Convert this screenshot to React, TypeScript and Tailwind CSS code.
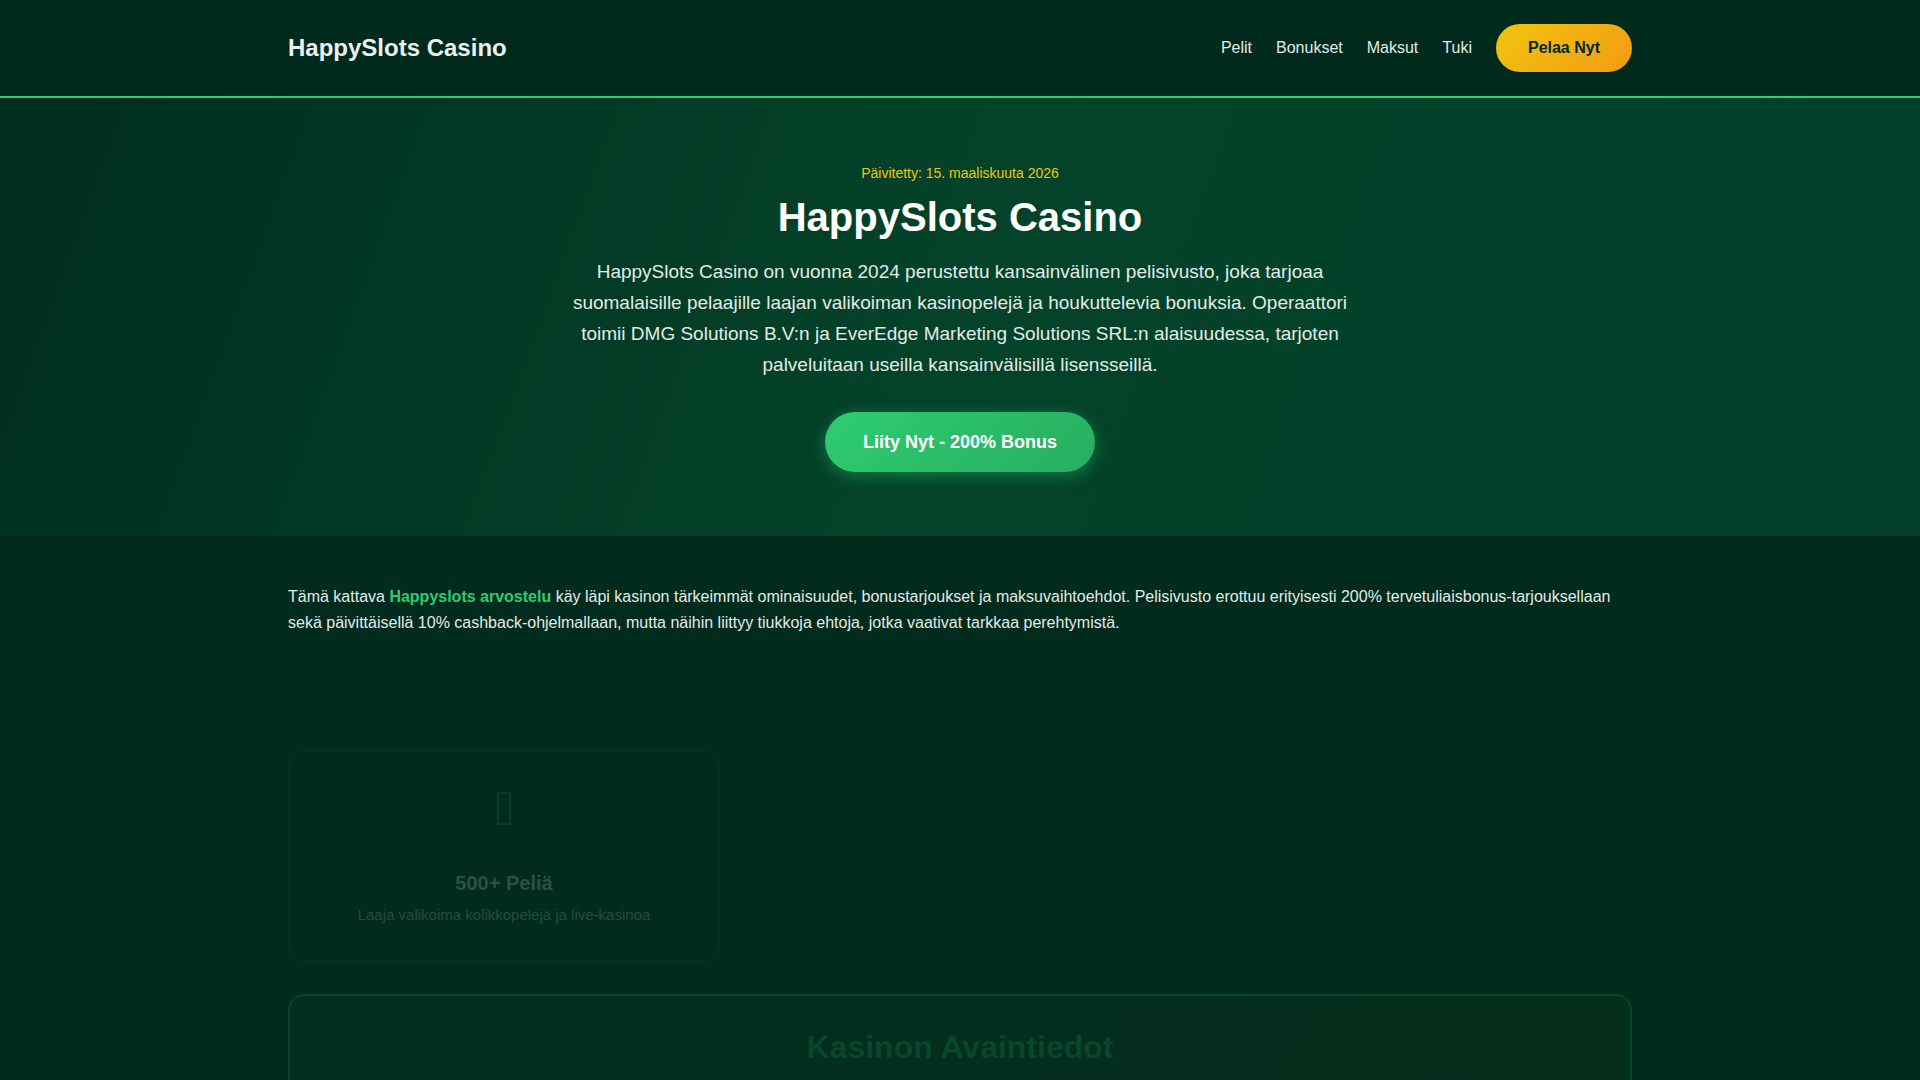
import React from 'react';

const navItems = [
  { label: 'Pelit', href: '#pelit' },
  { label: 'Bonukset', href: '#bonukset' },
  { label: 'Maksut', href: '#maksut' },
  { label: 'Tuki', href: '#tuki' },
];

const features = [
  { title: '500+ Peliä', text: 'Laaja valikoima kolikkopelejä ja live-kasinoa' },
];

function Header() {
  return (
    <header className="border-b-2 border-[#2ecc71] bg-[#002a1c] px-6 py-6">
      <div className="mx-auto flex max-w-[1344px] items-center justify-between">
        <a href="#" className="text-2xl font-bold text-[#ecf0f1]">
          HappySlots Casino
        </a>
        <nav className="flex items-center gap-6">
          {navItems.map((item) => (
            <a key={item.href} href={item.href}>
              {item.label}
            </a>
          ))}
          <button
            type="button"
            className="h-12 rounded-full bg-linear-[135deg,#f1c40f,#f39c12] px-8 font-bold text-[#002a1c]"
          >
            Pelaa Nyt
          </button>
        </nav>
      </div>
    </header>
  );
}

function Hero() {
  return (
    <section className="bg-linear-[110deg,#002d1e,#044329_50%,#00402b] px-6 py-16 text-center">
      <div className="mx-auto flex max-w-[800px] flex-col items-center">
        <p className="text-sm leading-[22px] text-[#f1c40f]">Päivitetty: 15. maaliskuuta 2026</p>
        <h1 className="mt-2 mb-[14px] text-[40px] leading-[50px] font-bold text-white">HappySlots Casino</h1>
        <p className="mb-8 text-[19px] leading-[31px]">
          HappySlots Casino on vuonna 2024 perustettu kansainvälinen pelisivusto, joka tarjoaa
          suomalaisille pelaajille laajan valikoiman kasinopelejä ja houkuttelevia bonuksia. Operaattori
          toimii DMG Solutions B.V:n ja EverEdge Marketing Solutions SRL:n alaisuudessa, tarjoten
          palveluitaan useilla kansainvälisillä lisensseillä.
        </p>
        <button
          type="button"
          className="h-[60px] rounded-full bg-linear-[135deg,#2ecc71,#27ae60] px-[38px] text-lg font-bold text-white shadow-[0_4px_15px_rgba(46,204,113,0.4)]"
        >
          Liity Nyt - 200% Bonus
        </button>
      </div>
    </section>
  );
}

function FeatureCard({ title, text }: { title: string; text: string }) {
  return (
    <article className="flex flex-col items-center rounded-2xl border-2 border-[#003121] px-6 pt-10 pb-[33px] text-center">
      <svg width="14" height="33" viewBox="0 0 14 33" className="mb-[42px]" aria-hidden="true">
        <rect x="1" y="1" width="12" height="31" fill="none" stroke="#04472b" strokeWidth="1.6" />
      </svg>
      <h3 className="mb-1 text-xl leading-8 font-bold text-[#2a5143]">{title}</h3>
      <p className="text-[15px] leading-6 text-[#264d3f]">{text}</p>
    </article>
  );
}

export default function App() {
  return (
    <div className="min-h-screen bg-[#002b1d] font-['Liberation_Sans',Arial,sans-serif] text-[#e4eae8]">
      <Header />
      <Hero />
      <main className="px-6 pt-12">
        <div className="mx-auto max-w-[1344px]">
          <p className="mb-[114px] leading-[26px]">
            Tämä kattava <strong className="text-[#2ecc71]">Happyslots arvostelu</strong> käy läpi kasinon
            tärkeimmät ominaisuudet, bonustarjoukset ja maksuvaihtoehdot. Pelisivusto erottuu erityisesti
            200% tervetuliaisbonus-tarjouksellaan sekä päivittäisellä 10% cashback-ohjelmallaan, mutta
            näihin liittyy tiukkoja ehtoja, jotka vaativat tarkkaa perehtymistä.
          </p>

          {/* Features */}
          <section className="mb-8 grid grid-cols-3 gap-6">
            {features.map((feature) => (
              <FeatureCard key={feature.title} {...feature} />
            ))}
          </section>

          {/* Key facts */}
          <section className="rounded-t-2xl border-2 border-b-0 border-[#06452a] bg-linear-[135deg,#022e1f,#052d1c] px-8 pt-6 pb-2 text-center">
            <h2 className="text-[32px] leading-[54px] font-bold text-[#07472b]">Kasinon Avaintiedot</h2>
          </section>
        </div>
      </main>
    </div>
  );
}
